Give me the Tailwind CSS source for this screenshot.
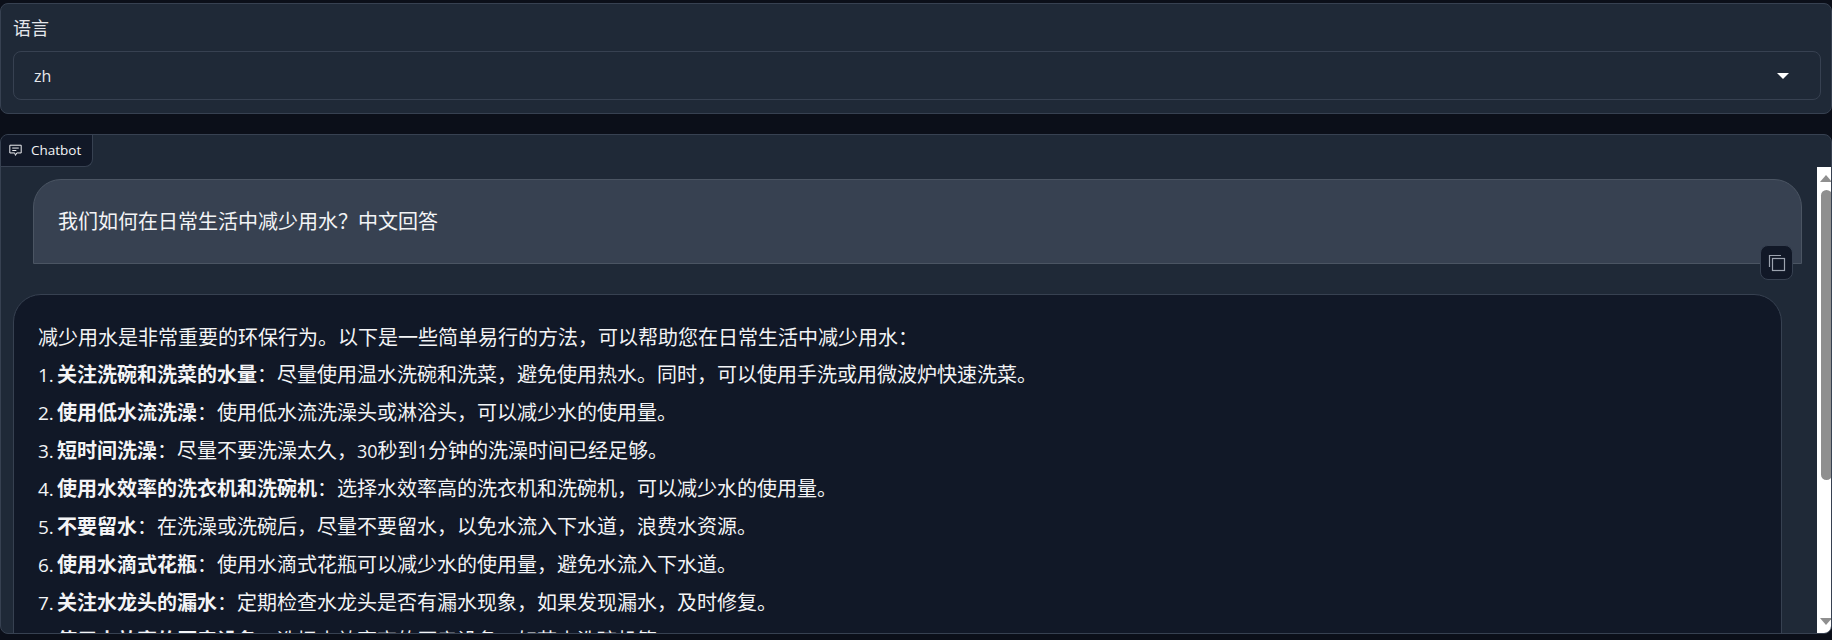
<!DOCTYPE html>
<html lang="zh">
<head>
    <meta charset="UTF-8">
    <title>Chatbot</title>
    <script src="https://cdn.jsdelivr.net/npm/@tailwindcss/browser@4"></script>
</head>
<body class="bg-[#0b0f19] h-[640px] overflow-hidden font-['Open_Sans','Noto_Sans_CJK_SC',sans-serif] text-[#f3f4f6]">

<div class="pt-[3px] flex flex-col gap-5">
    <!-- Language select -->
    <div class="h-[111px] bg-[#1f2937] border border-[#374151] rounded-lg px-3 pt-[12px]">
        <div class="text-[18px] leading-[24px] text-[#e5e7eb]">语言</div>
        <div class="mt-[11px] h-[49px] border border-[#374151] rounded-lg flex items-center justify-between pl-5 pr-[31px] mr-[-2px]">
            <span class="text-[16px] font-medium text-[#e5e7eb]">zh</span>
            <span class="w-0 h-0 border-x-[6px] border-x-transparent border-t-[6px] border-t-white"></span>
        </div>
    </div>

    <!-- Chatbot -->
    <div class="relative h-[500px] bg-[#1f2937] border border-[#374151] rounded-lg overflow-hidden flex">
        <div class="absolute left-0 top-0 h-[32px] w-[92px] bg-[#111827] border-r border-b border-[#374151] rounded-br-lg flex items-center gap-[9px] pl-[8px] text-[13.5px] font-medium text-[#f3f4f6]">
            <svg class="w-[13px] h-[13px]" viewBox="0 0 16 16" fill="none" stroke="currentColor" stroke-width="1.2">
                <path d="M1 1.5h14v9.5h-5.5l-1.5 3-1-3H1z"/>
                <path d="M4 5h8M4 8h5"/>
            </svg>
            Chatbot
        </div>

        <div class="flex-1 min-w-0 pl-3 pr-[15px] pt-[44px] flex flex-col">
            <!-- User message -->
            <div class="relative shrink-0 ml-[20px] h-[85px] bg-[#374151] border border-[#4b5563] rounded-t-[28px] flex items-center pl-[24px] text-[20px] text-[#f3f4f6]">
                我们如何在日常生活中减少用水？中文回答
                <div class="absolute right-[8px] top-[65px] w-[33px] h-[35px] bg-[#111827] border border-[#374151] rounded-lg flex items-center justify-center text-[#9ca3af]">
                    <svg class="w-[18px] h-[18px]" viewBox="0 0 18 18" fill="none" stroke="currentColor" stroke-width="1.2">
                        <rect x="4.5" y="4.5" width="12" height="12"/>
                        <path d="M1.5 13V1.5H13"/>
                    </svg>
                </div>
            </div>

            <!-- Bot message -->
            <div class="shrink-0 mt-[30px] mr-[20px] bg-[#111827] border border-[#374151] rounded-t-[28px] pl-[24px] pt-[24px] text-[20px] leading-[38px] text-[#f3f4f6] h-[400px]">
                <p class="h-[37px]">减少用水是非常重要的环保行为。以下是一些简单易行的方法，可以帮助您在日常生活中减少用水：</p>
                <p><span class="inline-block w-[19px] text-[19px]">1.</span><b>关注洗碗和洗菜的水量</b>：尽量使用温水洗碗和洗菜，避免使用热水。同时，可以使用手洗或用微波炉快速洗菜。</p>
                <p><span class="inline-block w-[19px] text-[19px]">2.</span><b>使用低水流洗澡</b>：使用低水流洗澡头或淋浴头，可以减少水的使用量。</p>
                <p><span class="inline-block w-[19px] text-[19px]">3.</span><b>短时间洗澡</b>：尽量不要洗澡太久，<span class="text-[18px]">30</span>秒到<span class="text-[18px]">1</span>分钟的洗澡时间已经足够。</p>
                <p><span class="inline-block w-[19px] text-[19px]">4.</span><b>使用水效率的洗衣机和洗碗机</b>：选择水效率高的洗衣机和洗碗机，可以减少水的使用量。</p>
                <p><span class="inline-block w-[19px] text-[19px]">5.</span><b>不要留水</b>：在洗澡或洗碗后，尽量不要留水，以免水流入下水道，浪费水资源。</p>
                <p><span class="inline-block w-[19px] text-[19px]">6.</span><b>使用水滴式花瓶</b>：使用水滴式花瓶可以减少水的使用量，避免水流入下水道。</p>
                <p><span class="inline-block w-[19px] text-[19px]">7.</span><b>关注水龙头的漏水</b>：定期检查水龙头是否有漏水现象，如果发现漏水，及时修复。</p>
                <p><span class="inline-block w-[19px] text-[19px]">8.</span><b>使用水效率的厨房设备</b>：选择水效率高的厨房设备，如节水洗碗机等。</p>
            </div>
        </div>

        <!-- Scrollbar -->
        <div class="mt-[32px] mr-[-1px] w-[15px] shrink-0 bg-white flex flex-col items-start pl-[3px]">
            <span class="mt-[8px] w-0 h-0 border-x-[6px] border-x-transparent border-b-[7px] border-b-[#8f8f8f]"></span>
            <div class="mt-[8px] w-[11px] ml-[1px] h-[290px] rounded-full bg-[#8f8f8f]"></div>
            <span class="mt-auto mb-[8px] w-0 h-0 border-x-[6px] border-x-transparent border-t-[7px] border-t-[#8f8f8f]"></span>
        </div>
    </div>
</div>
</body>
</html>
